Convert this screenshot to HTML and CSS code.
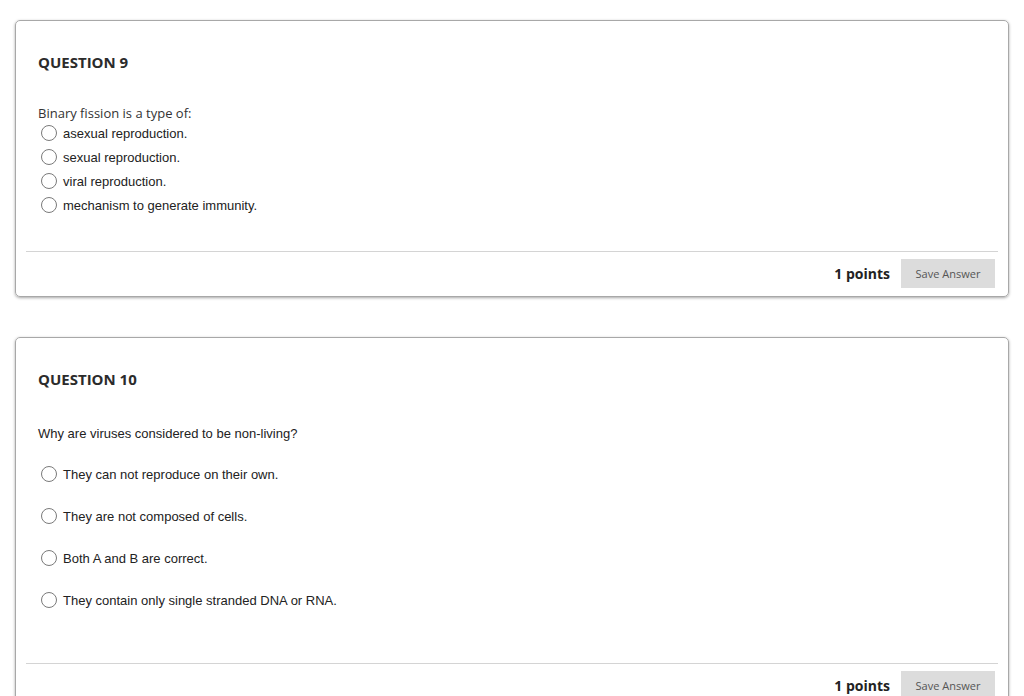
FILE: index.html
```html
<!DOCTYPE html>
<html>
<head>
<meta charset="utf-8">
<link rel="stylesheet" href="styles.css">
</head>
<body>
<div class="page">
  <section class="card card-q9">
    <h2 class="qtitle">QUESTION 9</h2>
    <p class="qtext qtext-open">Binary fission is a type of:</p>
    <ul class="options compact">
      <li class="opt"><span class="radio"></span><span>asexual reproduction.</span></li>
      <li class="opt"><span class="radio"></span><span>sexual reproduction.</span></li>
      <li class="opt"><span class="radio"></span><span>viral reproduction.</span></li>
      <li class="opt"><span class="radio"></span><span>mechanism to generate immunity.</span></li>
    </ul>
    <div class="footer">
      <span class="points">1 points</span>
      <button class="save">Save Answer</button>
    </div>
  </section>

  <section class="card card-q10">
    <h2 class="qtitle">QUESTION 10</h2>
    <p class="qtext">Why are viruses considered to be non-living?</p>
    <ul class="options spaced">
      <li class="opt"><span class="radio"></span><span>They can not reproduce on their own.</span></li>
      <li class="opt"><span class="radio"></span><span>They are not composed of cells.</span></li>
      <li class="opt"><span class="radio"></span><span>Both A and B are correct.</span></li>
      <li class="opt"><span class="radio"></span><span>They contain only single stranded DNA or RNA.</span></li>
    </ul>
    <div class="footer">
      <span class="points">1 points</span>
      <button class="save">Save Answer</button>
    </div>
  </section>
</div>
</body>
</html>
```

FILE: styles.css
```css
* { box-sizing: border-box; }
html, body { margin: 0; padding: 0; background: #fff; }
body { font-family: "Liberation Sans", Arial, sans-serif; color: #222; }

.page {
  display: flex;
  flex-direction: column;
  gap: 40px;
  padding: 20px 15px 0 15px;
}

.card {
  width: 994px;
  border: 1px solid #a8a8a8;
  border-radius: 5px;
  box-shadow: 0 1px 3px rgba(0,0,0,0.35);
  padding: 31px 10px 8px 10px;
  display: flex;
  flex-direction: column;
}
.card-q9 { height: 277px; }
.card-q10 { height: 372px; }

.qtitle {
  margin: 0 0 0 12px;
  font-family: "Open Sans", sans-serif;
  font-weight: 700;
  font-size: 15px;
  line-height: 20px;
  color: #2b2b2b;
}

.qtext {
  margin: 37px 0 0 12px;
  font-size: 13px;
  line-height: 15px;
  color: #222;
}
.qtext-open {
  margin-top: 34px;
  font-family: "Open Sans", sans-serif;
  font-size: 13px;
  color: #333;
}

.options {
  list-style: none;
  margin: 0 0 0 15px;
  padding: 0;
  display: flex;
  flex-direction: column;
}
.options.compact { margin-top: 0; }
.options.spaced { margin-top: 21px; gap: 18px; }

.opt {
  display: flex;
  align-items: center;
  gap: 6px;
  height: 24px;
  font-size: 13px;
  color: #222;
}

.radio {
  width: 16px;
  height: 16px;
  border: 1px solid #7a7a7a;
  border-radius: 50%;
  background: #fff;
  flex: none;
}

.footer {
  margin-top: auto;
  border-top: 1px solid #d4d4d4;
  padding: 7px 3px 0 0;
  display: flex;
  justify-content: flex-end;
  align-items: center;
  gap: 11px;
}

.points {
  font-family: "Open Sans", sans-serif;
  font-weight: 700;
  font-size: 14px;
  line-height: 18px;
  color: #222;
}

.save {
  width: 94px;
  height: 29px;
  border: none;
  background: #dcdcdc;
  font-family: "Open Sans", sans-serif;
  font-size: 11px;
  color: #555;
  padding: 0;
}
```
